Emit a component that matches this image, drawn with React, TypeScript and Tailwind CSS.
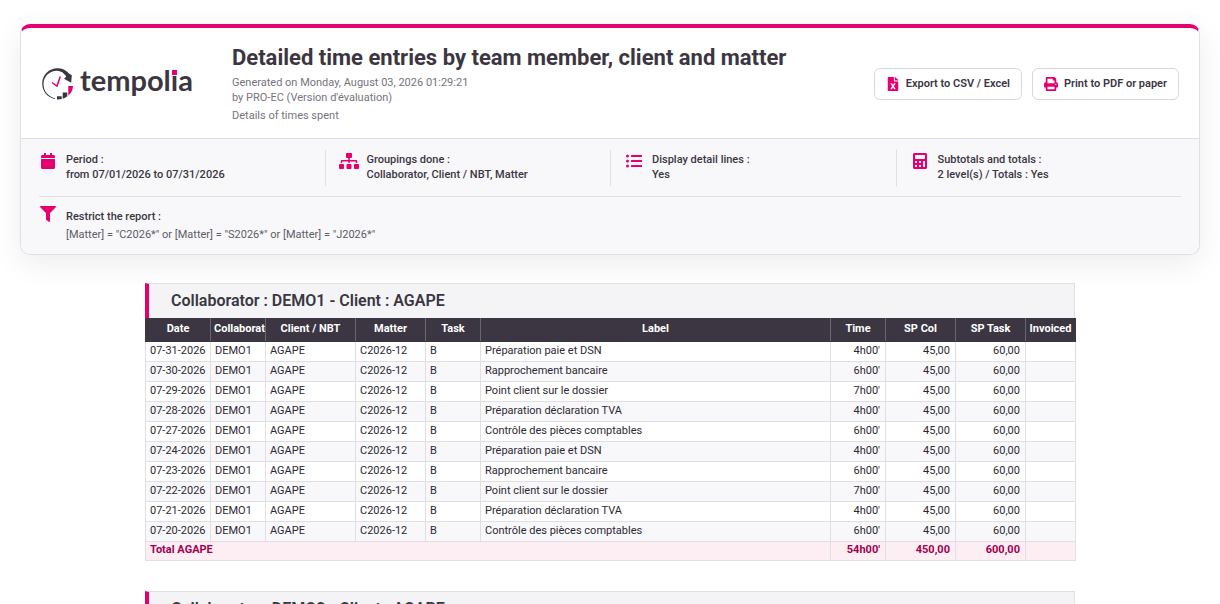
import type { ReactNode } from 'react';
import { FaCalculator, FaCalendar, FaFileExcel, FaFilter, FaListUl, FaPrint, FaSitemap } from 'react-icons/fa';

const COLUMNS = [
  { label: 'Date', width: 'w-[65px]' },
  { label: 'Collaborator', width: 'w-[55px]' },
  { label: 'Client / NBT', width: 'w-[90px]' },
  { label: 'Matter', width: 'w-[70px]' },
  { label: 'Task', width: 'w-[55px]' },
  { label: 'Label', width: '' },
  { label: 'Time', width: 'w-[55px]' },
  { label: 'SP Col', width: 'w-[70px]' },
  { label: 'SP Task', width: 'w-[70px]' },
  { label: 'Invoiced', width: 'w-[50px]' },
];

const ENTRIES = [
  { date: '07-31-2026', label: 'Préparation paie et DSN', time: "4h00'" },
  { date: '07-30-2026', label: 'Rapprochement bancaire', time: "6h00'" },
  { date: '07-29-2026', label: 'Point client sur le dossier', time: "7h00'" },
  { date: '07-28-2026', label: 'Préparation déclaration TVA', time: "4h00'" },
  { date: '07-27-2026', label: 'Contrôle des pièces comptables', time: "6h00'" },
  { date: '07-24-2026', label: 'Préparation paie et DSN', time: "4h00'" },
  { date: '07-23-2026', label: 'Rapprochement bancaire', time: "6h00'" },
  { date: '07-22-2026', label: 'Point client sur le dossier', time: "7h00'" },
  { date: '07-21-2026', label: 'Préparation déclaration TVA', time: "4h00'" },
  { date: '07-20-2026', label: 'Contrôle des pièces comptables', time: "6h00'" },
];

const SUMMARY = [
  { icon: FaCalendar, size: 'w-3.5', title: 'Period :', value: 'from 07/01/2026 to 07/31/2026' },
  { icon: FaSitemap, size: 'w-5', title: 'Groupings done :', value: 'Collaborator, Client / NBT, Matter' },
  { icon: FaListUl, size: 'w-4', title: 'Display detail lines :', value: 'Yes' },
  { icon: FaCalculator, size: 'w-3.5', title: 'Subtotals and totals :', value: '2 level(s) / Totals : Yes' },
];

function Logo() {
  return (
    <div className="flex w-[150px] items-center gap-[7px] pl-px">
      <svg viewBox="0 0 31 32" className="h-8 w-[31px] shrink-0" aria-hidden="true">
        <path
          d="M13 31C5.500 29.500 0.200 23.500 0.200 15.500C0.200 7 7 0.300 15.500 0.300C20 0.300 24 2.200 27 5.500L29.800 7.200L29.200 14.800L22 10.800L24.300 8.600C22 5 18.800 2.700 15 2.700C7.500 2.700 1.500 8.500 1.500 16C1.500 23 6 28.500 13 30.300Z"
          fill="#3b3641"
        />
        <path d="M10 14.500L15 18L18.300 8.500" fill="none" stroke="#e6006f" strokeWidth="1.500" />
        <path d="M26.300 18H31C31 21.500 29.300 25 26.300 27.500Z" fill="#e6006f" />
        <path d="M20.700 24.500H25.300V28.200C24 29.300 22.500 30.100 20.700 30.700Z" fill="#3b3641" />
        <path d="M15 28.300H19.700V31C18.200 31.400 16.500 31.500 15 31.400Z" fill="#3b3641" />
      </svg>
      <span className="pb-2 font-['Lato'] text-[29px] leading-8 font-bold text-[#3b3641]">
        tempol
        <span className="relative">
          i
          <span className="absolute top-2 left-px h-[5px] w-[5px] bg-[#e6006f]" />
        </span>
        a
      </span>
    </div>
  );
}

function ActionButton({ icon, children }: { icon: ReactNode; children: ReactNode }) {
  return (
    <button
      type="button"
      className="flex h-8 items-center gap-1.5 rounded-md border border-[#d9d7e0] bg-white px-[11px] text-[11px] font-semibold text-[#3b3641]"
    >
      <span className="text-[#e6006f]">{icon}</span>
      {children}
    </button>
  );
}

function SectionTitle({ children }: { children: ReactNode }) {
  return (
    <h2 className="h-[35px] border border-b-0 border-l-4 border-[#e0dfe5] border-l-[#e6006f] bg-[#f4f4f7] pl-[22px] text-base leading-[34px] font-semibold">
      {children}
    </h2>
  );
}

function EntriesTable() {
  const cell = 'h-5 border border-[#e0dfe5] pr-[5px] pb-0.5 pl-1 leading-4';
  const total = 'h-[18px] border border-[#e0dfe5] border-t-[#eaa6c2] pr-[5px] pb-0.5 pl-1 leading-4';

  return (
    <table className="w-[calc(100%+1px)] table-fixed border-collapse text-[11px] whitespace-nowrap">
      <thead>
        <tr className="bg-[#3b3641] text-white">
          {COLUMNS.map(({ label, width }) => (
            <th
              key={label}
              className={`${width} h-[23px] overflow-hidden border border-[#3b3641] border-x-[#6a6670] px-[3px] pb-0.5 leading-4 font-bold first:border-l-[#3b3641] last:border-r-[#3b3641]`}
            >
              {label}
            </th>
          ))}
        </tr>
      </thead>
      <tbody className="text-[#2d2933]">
        {ENTRIES.map(({ date, label, time }) => (
          <tr key={date} className="bg-white even:bg-[#f8f8fb]">
            <td className={cell}>{date}</td>
            <td className={cell}>DEMO1</td>
            <td className={cell}>AGAPE</td>
            <td className={cell}>C2026-12</td>
            <td className={cell}>B</td>
            <td className={cell}>{label}</td>
            <td className={`${cell} text-right`}>{time}</td>
            <td className={`${cell} text-right`}>45,00</td>
            <td className={`${cell} text-right`}>60,00</td>
            <td className={cell} />
          </tr>
        ))}
      </tbody>
      <tfoot>
        <tr className="bg-[#fceef3] font-bold text-[#a3004f]">
          <td colSpan={6} className={total}>Total AGAPE</td>
          <td className={`${total} text-right`}>54h00'</td>
          <td className={`${total} text-right`}>450,00</td>
          <td className={`${total} text-right`}>600,00</td>
          <td className={total} />
        </tr>
      </tfoot>
    </table>
  );
}

export default function App() {
  return (
    <main className="h-screen overflow-hidden bg-white px-5 pt-6 font-['Roboto',sans-serif] text-[#3b3641]">
      <header className="overflow-hidden rounded-[10px] border border-t-4 border-[#e0dfe5] border-t-[#e6006f] bg-white shadow-[0_8px_30px_rgba(0,0,0,0.08)]">
        <div className="flex items-center border-b border-[#e0dfe5] px-5 pt-4 pb-[14px]">
          <Logo />
          <div className="ml-[41px] flex-1">
            <h1 className="text-[22px] leading-7 font-bold">
              Detailed time entries by team member, client and matter
            </h1>
            <p className="mt-[3px] text-[11px] leading-[15px] text-[#77737d]">
              Generated on Monday, August 03, 2026 01:29:21
              <br />
              by PRO-EC (Version d'évaluation)
            </p>
            <p className="mt-[3px] text-[11px] leading-4 text-[#77737d]">Details of times spent</p>
          </div>
          <div className="flex gap-2.5">
            <ActionButton icon={<FaFileExcel className="h-3.5 w-auto" />}>Export to CSV / Excel</ActionButton>
            <ActionButton icon={<FaPrint className="h-3.5 w-auto" />}>Print to PDF or paper</ActionButton>
          </div>
        </div>

        {/* Report parameters */}
        <div className="bg-[#f8f8fb] px-[18px] pt-[11px] pb-2.5 text-[11px]">
          <div className="grid grid-cols-4 border-b border-[#e0dfe5] pb-2.5">
            {SUMMARY.map(({ icon: Icon, size, title, value }) => (
              <div
                key={title}
                className="flex gap-[9px] border-l border-[#e0dfe5] pb-1 pl-[14px] first:border-l-0 first:pl-0"
              >
                <div className="flex w-[18px] shrink-0 justify-center pt-[3px] text-[#e6006f]">
                  <Icon className={`h-4 shrink-0 ${size}`} />
                </div>
                <div className="pt-0.5 leading-[15px] font-medium">
                  <p>{title}</p>
                  <p>{value}</p>
                </div>
              </div>
            ))}
          </div>
          <div className="flex gap-[9px] pt-[9px]">
            <div className="flex w-[18px] shrink-0 justify-center text-[#e6006f]">
              <FaFilter className="h-4 w-auto shrink-0" />
            </div>
            <div className="pt-0.5 leading-[18px]">
              <p className="font-medium">Restrict the report :</p>
              <p className="text-[#5f5b66]">[Matter] = "C2026*" or [Matter] = "S2026*" or [Matter] = "J2026*"</p>
            </div>
          </div>
        </div>
      </header>

      <section className="mx-auto mt-7 max-w-[930px]">
        <SectionTitle>Collaborator : DEMO1 - Client : AGAPE</SectionTitle>
        <EntriesTable />
      </section>

      <section className="mx-auto mt-[30px] max-w-[930px]">
        <SectionTitle>Collaborator : DEMO2 - Client : AGAPE</SectionTitle>
      </section>
    </main>
  );
}
